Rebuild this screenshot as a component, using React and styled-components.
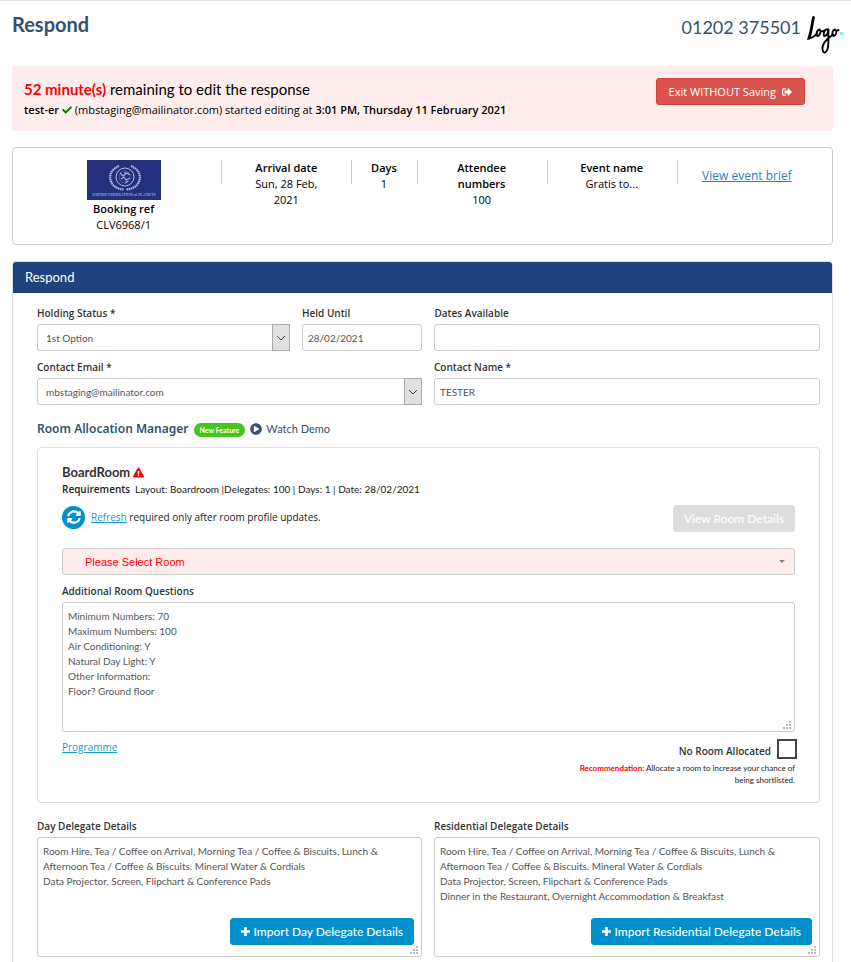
import React from "react";
import styled, { createGlobalStyle } from "styled-components";
import {
  FaCheck,
  FaSignOutAlt,
  FaPlayCircle,
  FaExclamationTriangle,
  FaSyncAlt,
} from "react-icons/fa";

const body = `"Lato", sans-serif`;
const label = `"Open Sans", sans-serif`;

const GlobalStyle = createGlobalStyle`
  *, *::before, *::after { box-sizing: border-box; }
  body { margin: 0; background: #fff; color: #333; font-family: ${body}; }
`;

const Page = styled.main`
  border-top: 1px solid #ddd;
  padding: 0 18px 0 12px;
  display: flex;
  flex-direction: column;
`;

/* ---------- header ---------- */
const Header = styled.header`
  display: flex;
  justify-content: space-between;
  align-items: flex-start;
  height: 65px;
  padding-top: 12px;
  margin-right: -11px;
  color: #34526b;
`;
const PageTitle = styled.h1`
  margin: 0;
  font-size: 20px;
  line-height: 22px;
  font-weight: 700;
`;
const Brand = styled.div`
  display: flex;
  align-items: flex-start;
  gap: 6px;
`;
const Phone = styled.span`
  font-size: 18px;
  line-height: 28px;
`;

/* ---------- alert ---------- */
const Alert = styled.section`
  display: flex;
  justify-content: space-between;
  align-items: flex-start;
  padding: 12px 28px 12px 12px;
  margin-bottom: 16px;
  border-radius: 4px;
  background: #ffeded;
  color: #000;
`;
const TimeLeft = styled.p`
  margin: 0;
  font-size: 15px;
  line-height: 23px;
  strong { color: #f00; }
`;
const Editing = styled.p`
  margin: 0;
  font: 11px/18px ${label};
  b { font-weight: 600; }
  svg { color: #008000; vertical-align: -1px; }
`;
const Button = styled.button`
  display: inline-flex;
  align-items: center;
  justify-content: center;
  gap: ${(p) => p.$gap || 3}px;
  height: 27px;
  padding: 0 ${(p) => (p.$small ? 12 : 10)}px;
  border: 1px solid ${(p) => p.$border || p.$bg};
  border-radius: 3px;
  background: ${(p) => p.$bg};
  color: #fff;
  font: ${(p) => (p.$small ? `500 11px/16px ${label}` : `500 12px/16px ${body}`)};
  white-space: nowrap;
`;

/* ---------- summary ---------- */
const Summary = styled.section`
  display: grid;
  grid-template-columns: 3fr 2fr 1fr 2fr 2fr 2fr;
  min-height: 98px;
  padding: 12px 25px 11px 13px;
  margin-bottom: 16px;
  border: 1px solid #ccc;
  border-radius: 4px;
  color: #000;
`;
const Cell = styled.div`
  display: flex;
  flex-direction: column;
  align-items: center;
  padding: 0 ${(p) => (p.$narrow ? 4 : 30)}px;
  text-align: center;
  font: 11px/16px ${label};
  background: ${(p) =>
    p.$first ? "none" : "linear-gradient(#ccc, #ccc) left top / 1px 24px no-repeat"};
  b { font-weight: 600; }
  svg { display: block; margin-bottom: 1px; }
`;
const BriefLink = styled.a`
  margin: 8px -20px 0 -10px;
  font: 12px/16px ${label};
  color: #337ab7;
  white-space: nowrap;
`;

/* ---------- panel ---------- */
const Panel = styled.section`
  border: 1px solid #ddd;
  border-radius: 4px 4px 0 0;
  min-height: 720px;
`;
const PanelHead = styled.h2`
  margin: 0;
  padding: 0 12px;
  border-radius: 3px 3px 0 0;
  background: #1f417c;
  color: #fff;
  font-size: 13px;
  line-height: 31px;
  font-weight: 400;
`;
const Form = styled.form`
  padding: 12px 12px 5px 24px;
`;
const Row = styled.div`
  display: grid;
  grid-template-columns: ${(p) => p.$cols || "385fr 386fr"};
  gap: 12px;
  margin-bottom: 8px;
`;
const Field = styled.div`
  display: flex;
  flex-direction: column;
  gap: 3px;
  min-width: 0;
`;
const Label = styled.label`
  font: 600 10px/16px ${label};
  color: #333;
`;
const Input = styled.input`
  width: 100%;
  height: 27px;
  padding: 0 5px;
  border: 1px solid #ccc;
  border-radius: 3px;
  background: #fff;
  color: #555;
  font: 10px/16px ${body};
`;
const SelectBox = styled.div`
  display: grid;
  > * { grid-area: 1 / 1; }
`;
const Select = styled.select`
  appearance: none;
  width: 100%;
  height: 27px;
  padding: 0 24px 0 ${(p) => (p.$room ? 22 : 8)}px;
  border: 1px solid #ccc;
  border-radius: 3px;
  background: ${(p) => (p.$room ? "#ffeded" : "#fff")};
  color: ${(p) => (p.$room ? "#f00" : "#555")};
  font: ${(p) => (p.$room ? `11px/16px "Liberation Sans", sans-serif` : `10px/16px ${body}`)};
`;
const Arrow = styled.span`
  justify-self: end;
  display: grid;
  place-items: center;
  width: 18px;
  height: 27px;
  border: 1px solid #aaa;
  background: #e1e1e1;
  pointer-events: none;
`;
const Caret = styled.span`
  justify-self: end;
  align-self: center;
  margin-right: 10px;
  border: 3px solid transparent;
  border-top-color: #888;
  border-bottom-width: 0;
  pointer-events: none;
`;
const dot = (x, y) =>
  `linear-gradient(#bbb, #bbb) right ${x}px bottom ${y}px / 2px 2px no-repeat`;
const TextArea = styled.textarea`
  display: block;
  width: 100%;
  height: ${(p) => p.$h}px;
  padding: 6px 5px;
  border: 1px solid #ccc;
  border-radius: 3px;
  background: #fff;
  color: #555;
  font: 10px/15px ${body};
  resize: vertical;
  &::-webkit-resizer {
    background: ${[
      [3, 2], [6, 2], [9, 2], [3, 5], [6, 5], [3, 8],
    ].map(([x, y]) => dot(x, y)).join(", ")};
  }
`;

/* ---------- room allocation ---------- */
const Manager = styled.div`
  display: flex;
  align-items: center;
  gap: 5px;
  padding: 7px 0 9px;
  height: 34px;
  color: #34526b;
`;
const ManagerTitle = styled.h3`
  margin: 0;
  font: 600 12px/18px "Noto Sans", sans-serif;
`;
const Badge = styled.span`
  margin-top: 2px;
  padding: 0 6px;
  border-radius: 7px;
  background: #45c41c;
  color: #fff;
  font: 700 7px/14px ${body};
`;
const Demo = styled.a`
  display: inline-flex;
  align-items: center;
  gap: 4px;
  color: inherit;
  text-decoration: none;
  font-size: 11px;
  line-height: 18px;
`;
const Room = styled.div`
  margin-bottom: 15px;
  min-height: 356px;
  padding: 15px 24px;
  border: 1px solid #ddd;
  border-radius: 4px;
`;
const RoomName = styled.h4`
  display: flex;
  align-items: center;
  gap: 3px;
  margin: 0;
  font-size: 13px;
  line-height: 18px;
  font-weight: 700;
  svg { color: #f00; }
`;
const Needs = styled.p`
  margin: 0;
  font-size: 10px;
  line-height: 17px;
  color: #222;
  b { font: 600 10px/16px ${label}; margin-right: 5px; }
`;
const Bar = styled.div`
  display: flex;
  justify-content: space-between;
  align-items: flex-start;
  margin: 7px 0 16px;
`;
const Refresh = styled.p`
  display: flex;
  align-items: center;
  gap: 6px;
  margin: 0;
  font: 10px/24px ${label};
  color: #222;
`;
const Disc = styled.span`
  display: grid;
  place-items: center;
  width: 23px;
  height: 23px;
  border-radius: 50%;
  background: #0090cc;
  color: #fff;
`;
const Link = styled.a`
  color: #1898cf;
  font: 10px/16px ${label};
`;
const Questions = styled.div`
  margin: 8px 0 7px;
`;
const Foot = styled.div`
  display: flex;
  justify-content: space-between;
  align-items: flex-start;
`;
const NoRoom = styled.div`
  width: 220px;
  text-align: right;
`;
const Tick = styled.label`
  display: flex;
  justify-content: flex-end;
  align-items: center;
  gap: 6px;
  margin-right: -2px;
  font: 600 10px/22px ${label};
  color: #333;
`;
const Checkbox = styled.input`
  appearance: none;
  width: 20px;
  height: 20px;
  margin: 0 0 3px;
  border: 2px solid #444;
  background: #fff;
`;
const Advice = styled.p`
  margin: 0;
  font-size: 8px;
  line-height: 12px;
  color: #222;
  strong { color: #f00; }
`;
const Overlay = styled.div`
  position: relative;
  ${Button} { position: absolute; right: 8px; bottom: 12px; }
`;

function Logo() {
  return (
    <svg width="37" height="42" viewBox="1 0 37 42" fill="none" stroke="#000" strokeLinecap="round" strokeLinejoin="round" role="img" aria-label="Logo">
      <path d="M7.5 4.5C6 11 5.5 18 3 25" strokeWidth="2.8" />
      <path d="M2 26C6 25 8.5 23.5 11 21" strokeWidth="1.8" />
      <path d="M13.5 16.5C10.5 17 9.5 23 11.5 23C14 23 15.5 17 13.5 16.5C15 18.5 16.5 19 18 17.5" strokeWidth="1.8" />
      <path d="M21.5 16.5C18.5 15.5 16.5 22.5 18.5 23C20.5 23 22 19.5 22.5 16.5C22 22 23 28 22 34C21.5 38.5 18.5 41 17 38.5C15.5 35 17 30 22 25.5L27 21.5" strokeWidth="1.9" />
      <path d="M29 16.5C26 17 25.5 23 27.5 23C30.5 23 31 17 29 16.5C30 18 31.5 18 32.5 17" strokeWidth="1.8" />
      <circle cx="35.5" cy="20.5" r="1.7" fill="#6ff3f0" stroke="none" />
    </svg>
  );
}

function Plus() {
  return (
    <svg width="9" height="9" viewBox="0 0 9 9" stroke="currentColor" strokeWidth="2.5" aria-hidden="true">
      <path d="M0 4.5h9M4.5 0v9" />
    </svg>
  );
}

function Flag() {
  return (
    <svg width="74" height="40" viewBox="0 0 74 40" role="img" aria-label="United Federation of Planets">
      <rect width="74" height="40" fill="#22307d" />
      <g fill="none" stroke="#c5cde8">
        <circle cx="38" cy="17" r="9" strokeWidth="0.9" />
        <circle cx="38" cy="17" r="6" strokeWidth="0.4" opacity="0.6" />
        <path d="M32 6C25 9 22 14 23.5 20C25 26 30 29 37 29.5M44 6C51 9 54 14 52.5 20C51 26 46 29 39 29.5" strokeWidth="2.2" strokeDasharray="1.6 0.5" opacity="0.85" />
        <path d="M33 13l3 3 4-3 3 2M34 19l3-2 2 3 4-2M38 12v3M41 21l-3 2" strokeWidth="1.2" opacity="0.8" />
      </g>
      <text x="37" y="36" textAnchor="middle" fill="#c5cde8" fontFamily="Liberation Serif, serif" fontSize="4">
        UNITED FEDERATION of PLANETS
      </text>
    </svg>
  );
}

function Dropdown({ id, value }) {
  return (
    <SelectBox>
      <Select id={id} defaultValue={value}>
        <option>{value}</option>
      </Select>
      <Arrow>
        <svg width="10" height="6" viewBox="0 0 10 6" fill="none" stroke="#444">
          <path d="M1 1l4 4 4-4" />
        </svg>
      </Arrow>
    </SelectBox>
  );
}

const questions = `Minimum Numbers: 70
Maximum Numbers: 100
Air Conditioning: Y
Natural Day Light: Y
Other Information:
Floor? Ground floor`;
const dayDetails = `Room Hire, Tea / Coffee on Arrival, Morning Tea / Coffee & Biscuits, Lunch &
Afternoon Tea / Coffee & Biscuits. Mineral Water & Cordials
Data Projector, Screen, Flipchart & Conference Pads`;
const residentialDetails = `${dayDetails}
Dinner in the Restaurant, Overnight Accommodation & Breakfast`;

function Details({ id, title, value, action }) {
  return (
    <Field>
      <Label htmlFor={id}>{title}</Label>
      <Overlay>
        <TextArea id={id} $h={120} defaultValue={value} />
        <Button type="button" $bg="#0090cc">
          <Plus />
          {action}
        </Button>
      </Overlay>
    </Field>
  );
}

export default function App() {
  return (
    <Page>
      <GlobalStyle />
      <Header>
        <PageTitle>Respond</PageTitle>
        <Brand>
          <Phone>01202 375501</Phone>
          <Logo />
        </Brand>
      </Header>

      <Alert>
        <div>
          <TimeLeft>
            <strong>52 minute(s)</strong> remaining to edit the response
          </TimeLeft>
          <Editing>
            <b>test-er</b> <FaCheck size={10} /> (mbstaging@mailinator.com) started editing at{" "}
            <b>3:01 PM, Thursday 11 February 2021</b>
          </Editing>
        </div>
        <Button type="button" $bg="#d9534f" $border="#d43f3a" $gap={6} $small>
          Exit WITHOUT Saving
          <FaSignOutAlt size={10} />
        </Button>
      </Alert>

      <Summary>
        <Cell $first>
          <Flag />
          <b>Booking ref</b>
          <span>CLV6968/1</span>
        </Cell>
        <Cell>
          <b>Arrival date</b>
          <span>Sun, 28 Feb, 2021</span>
        </Cell>
        <Cell $narrow>
          <b>Days</b>
          <span>1</span>
        </Cell>
        <Cell>
          <b>Attendee numbers</b>
          <span>100</span>
        </Cell>
        <Cell>
          <b>Event name</b>
          <span>Gratis to...</span>
        </Cell>
        <Cell>
          <BriefLink href="#brief">View event brief</BriefLink>
        </Cell>
      </Summary>

      <Panel>
        <PanelHead>Respond</PanelHead>
        <Form>
          <Row $cols="21fr 10fr 32fr">
            <Field>
              <Label htmlFor="status">Holding Status *</Label>
              <Dropdown id="status" value="1st Option" />
            </Field>
            <Field>
              <Label htmlFor="held">Held Until</Label>
              <Input id="held" defaultValue="28/02/2021" />
            </Field>
            <Field>
              <Label htmlFor="dates">Dates Available</Label>
              <Input id="dates" />
            </Field>
          </Row>
          <Row>
            <Field>
              <Label htmlFor="email">Contact Email *</Label>
              <Dropdown id="email" value="mbstaging@mailinator.com" />
            </Field>
            <Field>
              <Label htmlFor="name">Contact Name *</Label>
              <Input id="name" defaultValue="TESTER" />
            </Field>
          </Row>

          <Manager>
            <ManagerTitle>Room Allocation Manager</ManagerTitle>
            <Badge>New Feature</Badge>
            <Demo href="#demo">
              <FaPlayCircle size={12} />
              Watch Demo
            </Demo>
          </Manager>

          <Room>
            <RoomName>
              BoardRoom
              <FaExclamationTriangle size={11} />
            </RoomName>
            <Needs>
              <b>Requirements</b>
              Layout: Boardroom |Delegates: 100 | Days: 1 | Date: 28/02/2021
            </Needs>
            <Bar>
              <Refresh>
                <Disc>
                  <FaSyncAlt size={14} />
                </Disc>
                <span>
                  <Link href="#refresh">Refresh</Link> required only after room profile updates.
                </span>
              </Refresh>
              <Button type="button" $bg="#ddd">View Room Details</Button>
            </Bar>
            <SelectBox>
              <Select $room aria-label="Room" defaultValue="Please Select Room">
                <option>Please Select Room</option>
              </Select>
              <Caret />
            </SelectBox>
            <Questions>
              <Field>
                <Label htmlFor="questions">Additional Room Questions</Label>
                <TextArea id="questions" $h={130} defaultValue={questions} />
              </Field>
            </Questions>
            <Foot>
              <Link href="#programme">Programme</Link>
              <NoRoom>
                <Tick>
                  No Room Allocated
                  <Checkbox type="checkbox" />
                </Tick>
                <Advice>
                  <strong>Recommendation:</strong> Allocate a room to increase your chance of being
                  shortlisted.
                </Advice>
              </NoRoom>
            </Foot>
          </Room>

          <Row>
            <Details
              id="day"
              title="Day Delegate Details"
              value={dayDetails}
              action="Import Day Delegate Details"
            />
            <Details
              id="residential"
              title="Residential Delegate Details"
              value={residentialDetails}
              action="Import Residential Delegate Details"
            />
          </Row>
        </Form>
      </Panel>
    </Page>
  );
}
